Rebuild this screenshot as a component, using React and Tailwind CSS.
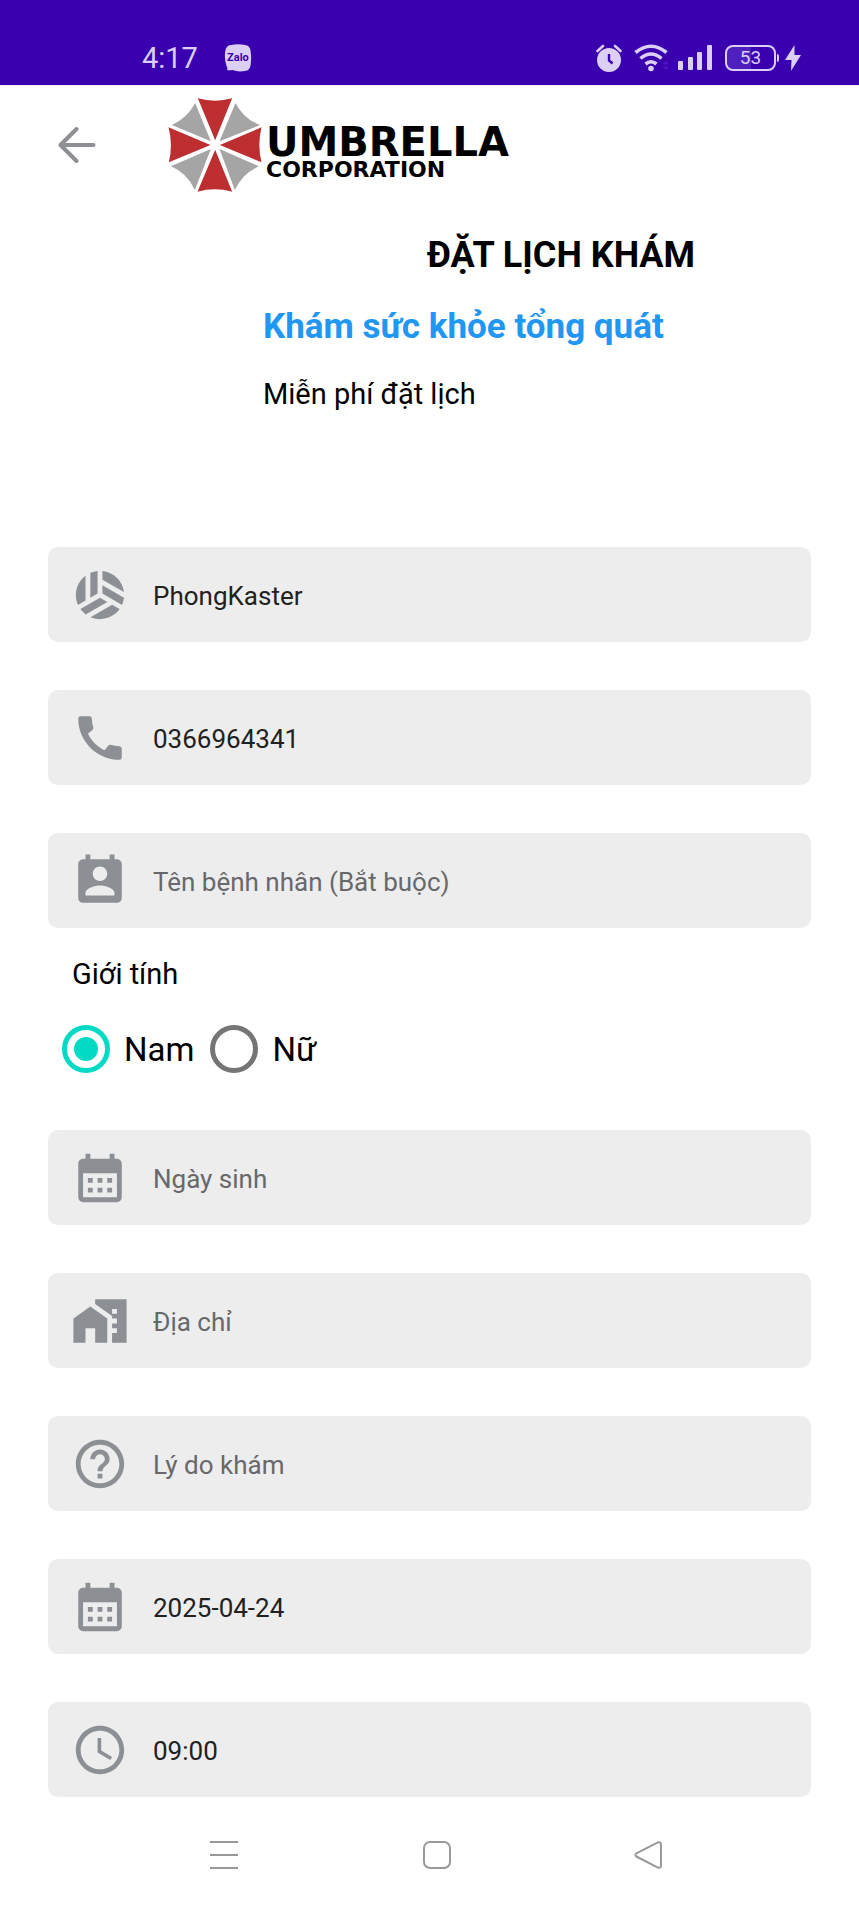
import React from "react";
import { MdSportsVolleyball, MdCalendarMonth, MdHelpOutline, MdSchedule } from "react-icons/md";

function PhoneIcon({ size }) {
  return (
    <svg viewBox="0 0 24 24" width={size} height={size} fill="currentColor" aria-hidden="true">
      <path d="M20.010 15.380c-1.230 0-2.420-.2-3.530-.56-.35-.12-.74-.03-1.010.24l-1.570 1.970c-2.830-1.350-5.480-3.900-6.890-6.830l1.950-1.660c.27-.28.35-.67.24-1.020-.37-1.110-.56-2.300-.56-3.530 0-.54-.45-.99-.99-.99H4.190C3.650 3 3 3.240 3 3.990 3 13.280 10.730 21 20.010 21c.71 0 .99-.63.99-1.180v-3.450c0-.54-.45-.99-.99-.99z" />
    </svg>
  );
}

function ContactIcon({ size }) {
  return (
    <svg viewBox="0 0 24 24" width={size} height={size} fill="currentColor" aria-hidden="true">
      <path d="M19 3h-1V1h-2v2H8V1H6v2H5c-1.110 0-2 .9-2 2v14c0 1.100.89 2 2 2h14c1.100 0 2-.9 2-2V5c0-1.100-.9-2-2-2zm-7 3c1.660 0 3 1.340 3 3s-1.340 3-3 3-3-1.340-3-3 1.340-3 3-3zm6 12H6v-1c0-2 4-3.100 6-3.100s6 1.100 6 3.100v1z" />
    </svg>
  );
}

function HomeWorkIcon({ size }) {
  return (
    <svg viewBox="0 0 24 24" width={size} height={size} fill="currentColor" aria-hidden="true">
      <path d="M1 11v10h5v-6h4v6h5V11L8 6z" />
      <path d="M10 3v1.970l7 5V11h2v2h-2v2h2v2h-2v4h6V3H10zm9 6h-2V7h2v2z" />
    </svg>
  );
}

function StatusBar() {
  return (
    <div className="flex h-[85px] items-start justify-between bg-[#3a00b0] pr-[58px] pl-[142px] pt-[41px] text-[#dccff5]">
      <div className="flex items-center gap-[26px]">
        <span className="text-[29px] leading-[34px]">4:17</span>
        <span className="relative flex h-7 w-7 items-center justify-center">
          <svg viewBox="0 0 28 28" className="absolute inset-0 h-7 w-7" fill="currentColor" aria-hidden="true">
            <path d="M7 1Q14-.3 21 1Q26 1.500 26.600 7Q27.600 14 26.600 21Q26 26.500 21 27Q14 28.200 8.500 26Q6 26.500 2.800 26Q4 24 2.500 22Q0 14 1.300 7Q2 1.500 7 1Z" />
          </svg>
          <span className="relative text-[11px] leading-3 font-bold text-[#3a00b0]">Zalo</span>
        </span>
      </div>
      <div className="flex h-[34px] items-center">
        <svg viewBox="0 0 26 28" className="h-7 w-[26px]" aria-hidden="true">
          <circle cx="13" cy="16" r="12" fill="currentColor" />
          <path d="M1.500 7 7 2M24.500 7 19 2" stroke="currentColor" strokeWidth="2.600" strokeLinecap="round" />
          <path d="M13 10v6.500l3.500 3" fill="none" stroke="#3a00b0" strokeWidth="2.400" />
        </svg>
        <svg viewBox="0 0 34 28" className="ml-3 h-7 w-[34px]" fill="none" stroke="currentColor" strokeWidth="3.600" aria-hidden="true">
          <path d="M1.500 8.500Q17-4 32.500 8.500" />
          <path d="M6.500 14.500Q17 5.500 27.500 14.500" />
          <path d="M11.500 20Q17 15.500 22.500 20" />
          <circle cx="17" cy="24.500" r="2.800" fill="currentColor" stroke="none" />
          <path d="M28.500 20.500 32 17l3.500 3.500zM28.500 22.500 32 26l3.500-3.500z" fill="#4a17bb" stroke="none" />
        </svg>
        <svg viewBox="0 0 36 26" className="ml-[9px] h-[26px] w-9" fill="currentColor" aria-hidden="true">
          <rect x="1" y="16" width="5" height="9" rx="1" />
          <rect x="11" y="12" width="5" height="13" rx="1" />
          <rect x="20" y="7" width="5" height="18" rx="1" />
          <rect x="30" y="0" width="5" height="25" rx="1" />
        </svg>
        <span className="ml-3 flex h-[26px] w-[51px] items-center justify-center rounded-lg border-2 border-current bg-linear-to-r from-[#4f20bd] from-50% to-[#3a00b0] to-50% text-[19px] leading-5">
          53
        </span>
        <span className="ml-px h-2 w-[2px] rounded-r bg-current" />
        <svg viewBox="0 0 16 26" className="ml-[6px] h-[26px] w-4" fill="currentColor" aria-hidden="true">
          <path d="M9.500 0 0 15h6.500L6 26 16 10H9.500z" />
        </svg>
      </div>
    </div>
  );
}

function UmbrellaMark() {
  return (
    <svg viewBox="385 38 281 282" className="h-[94px] w-[94px] shrink-0" aria-hidden="true">
      <g fill="#bd2e31">
        <path d="M474 39Q526 53 577 39L526 165Z" />
        <path d="M665 126Q652 179 665 231L540 179Z" />
        <path d="M577 319Q526 305 473 319L526 193Z" />
        <path d="M387 231Q400 179 386 126L512 179Z" />
      </g>
      <g fill="#a5a5a6">
        <path d="M587 53Q611 101 661 119L539 168Z" />
        <path d="M657 243Q608 264 585 314L539 191Z" />
        <path d="M465 314Q441 262 393 243L513 191Z" />
        <path d="M396 119Q443 98 466 53L513 168Z" />
      </g>
    </svg>
  );
}

function Header() {
  return (
    <header className="flex h-[119px] items-center border-t border-[#f8e8fc] pl-[58px]">
      <button type="button" aria-label="Quay lại" className="text-[#8e8f94]">
        <svg viewBox="0 0 38 38" className="h-[38px] w-[38px]" fill="none" stroke="currentColor" strokeWidth="4" strokeLinecap="round" strokeLinejoin="round" aria-hidden="true">
          <path d="M35.500 19H2.500M18.500 3 2.500 19l16 16" />
        </svg>
      </button>
      <div className="ml-[72px] flex items-center gap-1">
        <UmbrellaMark />
        <div className="pt-4 font-['DejaVu_Sans','Liberation_Sans',sans-serif] font-bold text-black">
          <div className="text-[40px] leading-[34px]">UMBRELLA</div>
          <div className="text-[22px] leading-[22px]">CORPORATION</div>
        </div>
      </div>
    </header>
  );
}

function Field({ id, label, icon: Icon, defaultValue }) {
  return (
    <div className="flex h-[95px] items-center rounded-[10px] bg-[#ededee] pl-[23px]">
      <label htmlFor={id} aria-label={label} className="shrink-0 text-[#8c9094]">
        <Icon size={58} aria-hidden="true" />
      </label>
      <input
        id={id}
        type="text"
        placeholder={label}
        defaultValue={defaultValue}
        className="ml-6 h-full min-w-0 flex-1 bg-transparent pt-[2px] text-[26px] text-[#212121] outline-none placeholder:text-[#68686a]"
      />
    </div>
  );
}

function GenderOption({ value, checked }) {
  return (
    <label className="flex items-center gap-[14px]">
      <input
        type="radio"
        name="gender"
        value={value}
        defaultChecked={checked}
        className="h-12 w-12 appearance-none rounded-full border-[5px] border-[#757575] bg-clip-content p-[7px] checked:border-[#03dac5] checked:bg-[#03dac5]"
      />
      <span className="pt-[2px] text-[33px] leading-10">{value}</span>
    </label>
  );
}

function NavigationBar() {
  return (
    <nav className="grid grid-cols-3 justify-items-center pt-11 pr-[103px] pb-[39px] pl-[117px] text-[#999999]">
      <button type="button" aria-label="Ứng dụng gần đây">
        <svg viewBox="0 0 30 28" className="h-7 w-[30px]" stroke="currentColor" strokeWidth="2" aria-hidden="true">
          <path d="M1 1h28M1 14h28M1 27h28" />
        </svg>
      </button>
      <button type="button" aria-label="Màn hình chính">
        <svg viewBox="0 0 28 28" className="h-7 w-7" fill="none" stroke="currentColor" strokeWidth="2" aria-hidden="true">
          <rect x="1" y="1" width="26" height="26" rx="6" />
        </svg>
      </button>
      <button type="button" aria-label="Trở về">
        <svg viewBox="2 0 28 28" className="h-7 w-7 overflow-visible" fill="none" stroke="currentColor" strokeWidth="2" strokeLinejoin="round" aria-hidden="true">
          <path d="M24 1.300 2.300 12.300Q.5 14 2.300 15.500L24 26.600Q27 27.500 27 24.500V3.500Q27 .5 24 1.300Z" />
        </svg>
      </button>
    </nav>
  );
}

export default function App() {
  return (
    <div className="min-h-screen bg-white font-[Roboto,sans-serif] text-black">
      <StatusBar />
      <Header />
      <main>
        <section className="pt-[30px] pl-[263px]">
          <h1 className="text-center text-[36px] leading-[42px] font-bold">ĐẶT LỊCH KHÁM</h1>
          <h2 className="mt-[30px] text-[35px] leading-[42px] font-bold text-[#2196f3]">Khám sức khỏe tổng quát</h2>
          <p className="mt-[29px] text-[29px] leading-[34px]">Miễn phí đặt lịch</p>
        </section>
        <form className="mt-[136px] px-12">
          <div className="flex flex-col gap-12">
            <Field id="name" label="Họ và tên" icon={MdSportsVolleyball} defaultValue="PhongKaster" />
            <Field id="phone" label="Số điện thoại" icon={PhoneIcon} defaultValue="0366964341" />
            <Field id="patient" label="Tên bệnh nhân (Bắt buộc)" icon={ContactIcon} />
          </div>
          <fieldset>
            <legend className="pt-[29px] pl-6 text-[29px] leading-[34px]">Giới tính</legend>
            <div className="mt-[34px] flex gap-4 pl-[14px]">
              <GenderOption value="Nam" checked />
              <GenderOption value="Nữ" />
            </div>
          </fieldset>
          <div className="mt-[57px] flex flex-col gap-12">
            <Field id="birthday" label="Ngày sinh" icon={MdCalendarMonth} />
            <Field id="address" label="Địa chỉ" icon={HomeWorkIcon} />
            <Field id="reason" label="Lý do khám" icon={MdHelpOutline} />
            <Field id="date" label="Ngày khám" icon={MdCalendarMonth} defaultValue="2025-04-24" />
            <Field id="time" label="Giờ khám" icon={MdSchedule} defaultValue="09:00" />
          </div>
        </form>
      </main>
      <NavigationBar />
    </div>
  );
}
